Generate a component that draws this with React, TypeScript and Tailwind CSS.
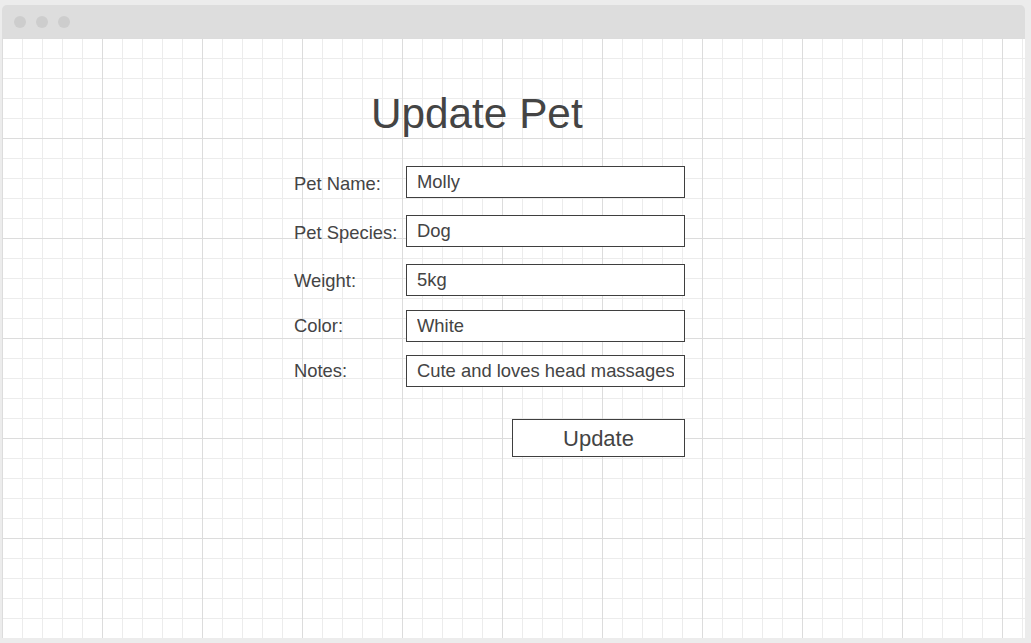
import { useState } from 'react';

interface Field {
  label: string;
  value: string;
  gap: string;
  labelShift: string;
}

const fields: Field[] = [
  { label: 'Pet Name:', value: 'Molly', gap: 'mt-0', labelShift: 'translate-y-[2px]' },
  { label: 'Pet Species:', value: 'Dog', gap: 'mt-[17px]', labelShift: 'translate-y-[2px]' },
  { label: 'Weight:', value: '5kg', gap: 'mt-[17px]', labelShift: 'translate-y-[1px]' },
  { label: 'Color:', value: 'White', gap: 'mt-[14px]', labelShift: 'translate-y-0' },
  { label: 'Notes:', value: 'Cute and loves head massages', gap: 'mt-[13px]', labelShift: 'translate-y-0' },
];

function WindowChrome({ children }: { children: React.ReactNode }) {
  return (
    <div className="h-[643px] w-[1031px] overflow-hidden bg-[#ececec] pt-[5px] pl-[2px] pr-[6px]">
      <div className="flex h-[633px] flex-col overflow-hidden rounded-t-[5px]">
        <div className="flex h-[33px] shrink-0 items-center gap-[10px] bg-[#dddddd] pl-[12px]">
          <span className="h-[12px] w-[12px] rounded-full bg-[#cdcdcd]" />
          <span className="h-[12px] w-[12px] rounded-full bg-[#cdcdcd]" />
          <span className="h-[12px] w-[12px] rounded-full bg-[#cdcdcd]" />
        </div>
        <div className="h-[600px] bg-white bg-[linear-gradient(to_right,#dcdcdc_1px,transparent_1px),linear-gradient(to_bottom,#dcdcdc_1px,transparent_1px),linear-gradient(to_right,#ececec_1px,transparent_1px),linear-gradient(to_bottom,#ececec_1px,transparent_1px)] bg-[size:100px_100px,100px_100px,20px_20px,20px_20px]">
          {children}
        </div>
      </div>
    </div>
  );
}

export default function App() {
  const [values, setValues] = useState(fields.map((f) => f.value));

  return (
    <div className="font-['Liberation_Sans',Arial,sans-serif] text-[#444444]">
      <WindowChrome>
        <div className="pl-[292px]">
          <h1 className="mt-[55px] pl-[77px] text-[42.3px] leading-[42px] font-normal">Update Pet</h1>
          <form className="mt-[31px] w-[391px]" onSubmit={(e) => e.preventDefault()}>
            {fields.map((field, i) => (
              <div key={field.label} className={`flex h-[32px] items-center ${field.gap}`}>
                <label className={`w-[112px] shrink-0 text-[18.4px] leading-[32px] ${field.labelShift}`}>
                  {field.label}
                </label>
                <input
                  className="h-[32px] w-[279px] border border-[#3f3f3f] bg-white px-[10px] text-[18.4px] text-[#444444] outline-none"
                  value={values[i]}
                  onChange={(e) => {
                    const next = [...values];
                    next[i] = e.target.value;
                    setValues(next);
                  }}
                />
              </div>
            ))}
            <div className="mt-[32px] flex justify-end">
              <button
                type="submit"
                className="h-[38px] w-[173px] border border-[#3f3f3f] bg-white text-[22px] text-[#444444]"
              >
                Update
              </button>
            </div>
          </form>
        </div>
      </WindowChrome>
    </div>
  );
}
